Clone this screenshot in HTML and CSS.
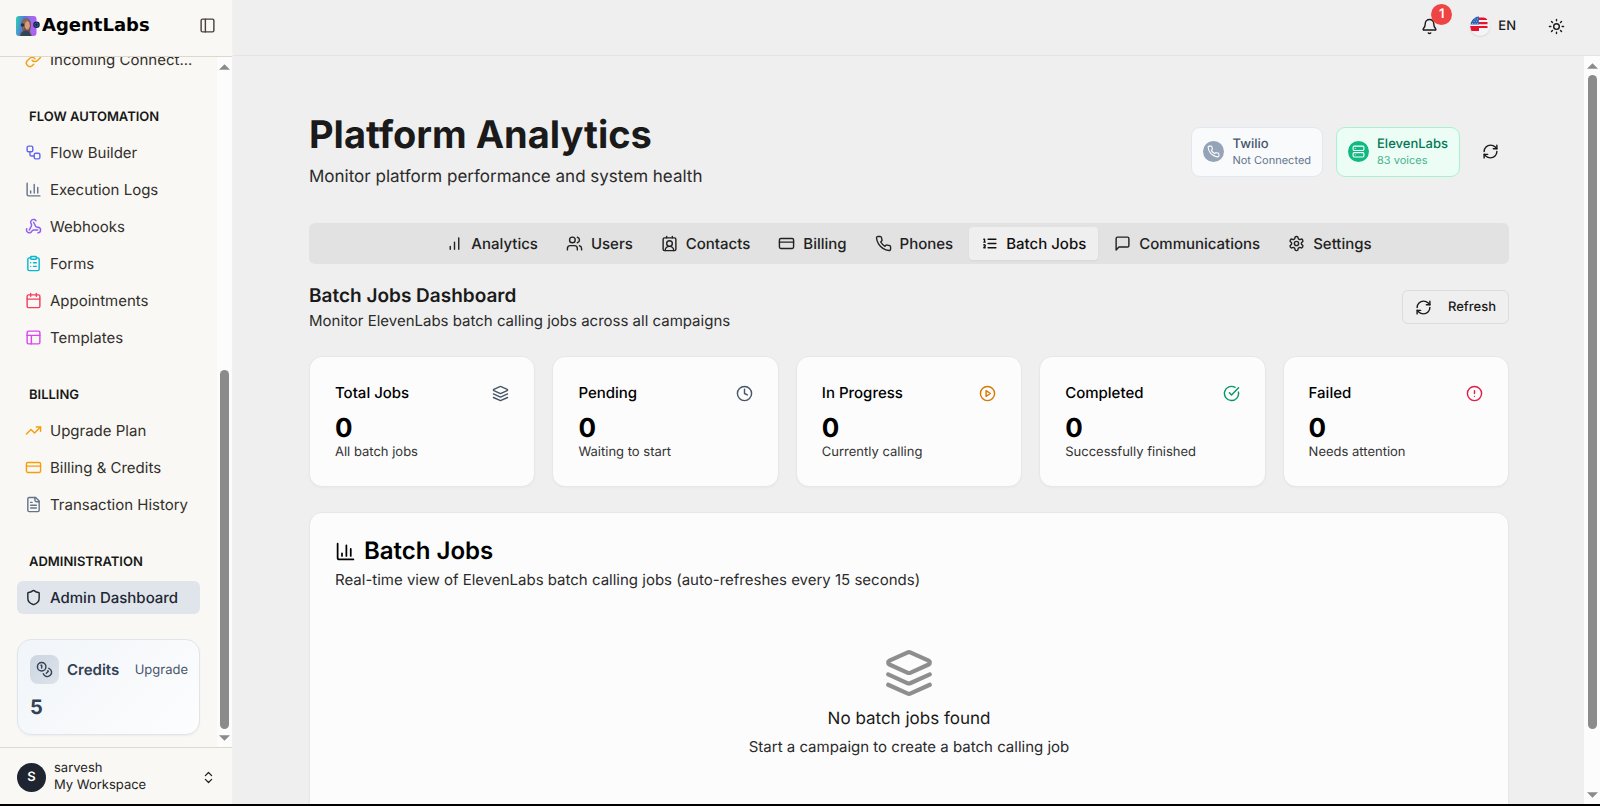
FILE: index.html
```html
<!DOCTYPE html>
<html lang="en">
<head>
<meta charset="utf-8">
<title>AgentLabs - Platform Analytics</title>
<link rel="stylesheet" href="styles.css">
</head>
<body>
<svg class="sprite" aria-hidden="true">
  <symbol id="i-panel" viewBox="0 0 24 24"><rect x="3" y="3" width="18" height="18" rx="2"/><path d="M9 3v18"/></symbol>
  <symbol id="i-link" viewBox="0 0 24 24"><path d="M10 13a5 5 0 0 0 7.54.54l3-3a5 5 0 0 0-7.07-7.07l-1.72 1.71"/><path d="M14 11a5 5 0 0 0-7.54-.54l-3 3a5 5 0 0 0 7.07 7.07l1.71-1.71"/></symbol>
  <symbol id="i-flow" viewBox="0 0 24 24"><rect x="3" y="3" width="8" height="8" rx="2"/><path d="M7 11v4a2 2 0 0 0 2 2h4"/><rect x="13" y="13" width="8" height="8" rx="2"/></symbol>
  <symbol id="i-chart" viewBox="0 0 24 24"><path d="M3 3v16a2 2 0 0 0 2 2h16M18 17V9M13 17V5M8 17v-3"/></symbol>
  <symbol id="i-bars" viewBox="0 0 24 24"><path d="M12 20V10M18 20V4M6 20v-4"/></symbol>
  <symbol id="i-webhook" viewBox="0 0 24 24"><path d="M18 16.98h-5.99c-1.1 0-1.95.94-2.48 1.9A4 4 0 0 1 2 17c.01-.7.2-1.4.57-2"/><path d="m6 17 3.13-5.78c.53-.97.1-2.18-.5-3.1a4 4 0 1 1 6.89-4.06"/><path d="m12 6 3.13 5.73C15.66 12.7 16.9 13 18 13a4 4 0 0 1 0 8"/></symbol>
  <symbol id="i-clipboard" viewBox="0 0 24 24"><rect x="8" y="2" width="8" height="4" rx="1"/><path d="M16 4h2a2 2 0 0 1 2 2v14a2 2 0 0 1-2 2H6a2 2 0 0 1-2-2V6a2 2 0 0 1 2-2h2M12 11h4M12 16h4M8 11h.01M8 16h.01"/></symbol>
  <symbol id="i-calendar" viewBox="0 0 24 24"><path d="M8 2v4M16 2v4M3 10h18"/><rect x="3" y="4" width="18" height="18" rx="2"/></symbol>
  <symbol id="i-template" viewBox="0 0 24 24"><rect x="3" y="3" width="18" height="18" rx="2"/><path d="M3 9h18M9 21V9"/></symbol>
  <symbol id="i-trend" viewBox="0 0 24 24"><path d="m22 7-8.500 8.500-5-5L2 17"/><path d="M16 7h6v6"/></symbol>
  <symbol id="i-card" viewBox="0 0 24 24"><rect x="2" y="5" width="20" height="14" rx="2"/><path d="M2 10h20"/></symbol>
  <symbol id="i-file" viewBox="0 0 24 24"><path d="M15 2H6a2 2 0 0 0-2 2v16a2 2 0 0 0 2 2h12a2 2 0 0 0 2-2V7Z"/><path d="M14 2v4a2 2 0 0 0 2 2h4M10 9H8M16 13H8M16 17H8"/></symbol>
  <symbol id="i-shield" viewBox="0 0 24 24"><path d="M20 13c0 5-3.500 7.500-7.660 8.950a1 1 0 0 1-.67-.01C7.500 20.500 4 18 4 13V6a1 1 0 0 1 1-1c2 0 4.500-1.200 6.240-2.720a1.170 1.170 0 0 1 1.520 0C14.510 3.810 17 5 19 5a1 1 0 0 1 1 1z"/></symbol>
  <symbol id="i-coins" viewBox="0 0 24 24"><circle cx="8" cy="8" r="6"/><path d="M18.090 10.370A6 6 0 1 1 10.340 18M7 6h1v4"/><path d="m16.710 13.880.7.710-2.820 2.820"/></symbol>
  <symbol id="i-updown" viewBox="0 0 24 24"><path d="m7 15 5 5 5-5M7 9l5-5 5 5"/></symbol>
  <symbol id="i-bell" viewBox="0 0 24 24"><path d="M10.268 21a2 2 0 0 0 3.464 0"/><path d="M3.262 15.326A1 1 0 0 0 4 17h16a1 1 0 0 0 .74-1.673C19.410 13.956 18 12.499 18 8A6 6 0 0 0 6 8c0 4.499-1.411 5.956-2.738 7.326"/></symbol>
  <symbol id="i-sun" viewBox="0 0 24 24"><circle cx="12" cy="12" r="4"/><path d="M12 2v2M12 20v2M4.930 4.930l1.410 1.410M17.660 17.660l1.410 1.410M2 12h2M20 12h2M6.340 17.660l-1.410 1.410M19.070 4.930l-1.410 1.410"/></symbol>
  <symbol id="i-phone" viewBox="0 0 24 24"><path d="M22 16.920v3a2 2 0 0 1-2.180 2 19.790 19.790 0 0 1-8.630-3.070 19.500 19.500 0 0 1-6-6 19.790 19.790 0 0 1-3.070-8.670A2 2 0 0 1 4.110 2h3a2 2 0 0 1 2 1.720 12.840 12.840 0 0 0 .7 2.810 2 2 0 0 1-.45 2.110L8.090 9.910a16 16 0 0 0 6 6l1.270-1.270a2 2 0 0 1 2.110-.45 12.840 12.840 0 0 0 2.810.7A2 2 0 0 1 22 16.920z"/></symbol>
  <symbol id="i-server" viewBox="0 0 24 24"><rect x="2" y="2" width="20" height="8" rx="2"/><rect x="2" y="14" width="20" height="8" rx="2"/><path d="M6 6h.01M6 18h.01"/></symbol>
  <symbol id="i-refresh" viewBox="0 0 24 24"><path d="M3 12a9 9 0 0 1 9-9 9.750 9.750 0 0 1 6.740 2.740L21 8"/><path d="M21 3v5h-5M21 12a9 9 0 0 1-9 9 9.750 9.750 0 0 1-6.740-2.740L3 16"/><path d="M8 16H3v5"/></symbol>
  <symbol id="i-users" viewBox="0 0 24 24"><path d="M16 21v-2a4 4 0 0 0-4-4H6a4 4 0 0 0-4 4v2"/><circle cx="9" cy="7" r="4"/><path d="M22 21v-2a4 4 0 0 0-3-3.870M16 3.130a4 4 0 0 1 0 7.750"/></symbol>
  <symbol id="i-contact" viewBox="0 0 24 24"><path d="M16 2v2M17.915 22a6 6 0 0 0-12 0M8 2v2"/><circle cx="12" cy="12" r="4"/><rect x="3" y="4" width="18" height="18" rx="2"/></symbol>
  <symbol id="i-list" viewBox="0 0 24 24"><path d="M10 12h11M10 18h11M10 6h11M4 10h2M4 6h1v4M6 18H4c0-1 2-2 2-3s-1-1.500-2-1"/></symbol>
  <symbol id="i-message" viewBox="0 0 24 24"><path d="M21 15a2 2 0 0 1-2 2H7l-4 4V5a2 2 0 0 1 2-2h14a2 2 0 0 1 2 2z"/></symbol>
  <symbol id="i-gear" viewBox="0 0 24 24"><path d="M12.220 2h-.44a2 2 0 0 0-2 2v.18a2 2 0 0 1-1 1.730l-.43.25a2 2 0 0 1-2 0l-.15-.08a2 2 0 0 0-2.730.73l-.22.38a2 2 0 0 0 .73 2.730l.15.1a2 2 0 0 1 1 1.720v.51a2 2 0 0 1-1 1.740l-.15.09a2 2 0 0 0-.73 2.730l.22.38a2 2 0 0 0 2.730.73l.15-.08a2 2 0 0 1 2 0l.43.25a2 2 0 0 1 1 1.730V20a2 2 0 0 0 2 2h.44a2 2 0 0 0 2-2v-.18a2 2 0 0 1 1-1.730l.43-.25a2 2 0 0 1 2 0l.15.08a2 2 0 0 0 2.730-.73l.22-.39a2 2 0 0 0-.73-2.730l-.15-.08a2 2 0 0 1-1-1.740v-.5a2 2 0 0 1 1-1.740l.15-.09a2 2 0 0 0 .73-2.730l-.22-.38a2 2 0 0 0-2.730-.73l-.15.08a2 2 0 0 1-2 0l-.43-.25a2 2 0 0 1-1-1.730V4a2 2 0 0 0-2-2z"/><circle cx="12" cy="12" r="3"/></symbol>
  <symbol id="i-layers" viewBox="0 0 24 24"><path d="m12.830 2.180a2 2 0 0 0-1.660 0L2.600 6.080a1 1 0 0 0 0 1.830l8.580 3.910a2 2 0 0 0 1.660 0l8.580-3.900a1 1 0 0 0 0-1.830Z"/><path d="m22 17.650-9.170 4.160a2 2 0 0 1-1.660 0L2 17.650"/><path d="m22 12.650-9.170 4.160a2 2 0 0 1-1.660 0L2 12.650"/></symbol>
  <symbol id="i-clock" viewBox="0 0 24 24"><circle cx="12" cy="12" r="10"/><path d="M12 6v6l4 2"/></symbol>
  <symbol id="i-play" viewBox="0 0 24 24"><circle cx="12" cy="12" r="10"/><path d="m10 8 6 4-6 4z"/></symbol>
  <symbol id="i-check" viewBox="0 0 24 24"><path d="M21.801 10A10 10 0 1 1 17 3.335"/><path d="m9 11 3 3L22 4"/></symbol>
  <symbol id="i-alert" viewBox="0 0 24 24"><circle cx="12" cy="12" r="10"/><path d="M12 8v4M12 16h.01"/></symbol>
  <symbol id="i-up" viewBox="0 0 12 6"><path class="arrow" d="M6 0 12 6H0z"/></symbol>
  <symbol id="i-down" viewBox="0 0 12 6"><path class="arrow" d="M0 0h12L6 6z"/></symbol>
</svg>

<div class="app">
  <aside class="sidebar">
    <div class="brand">
      <a class="logo" href="#">
        <svg class="logo-mark" viewBox="0 0 24 20" aria-hidden="true">
          <defs><linearGradient id="lg" x1="0" y1="0.300" x2="1" y2="0.500"><stop offset="0" stop-color="#2fc9b4"/><stop offset="0.350" stop-color="#5a78dc"/><stop offset="0.700" stop-color="#a06af2"/><stop offset="1" stop-color="#b060ef"/></linearGradient></defs>
          <rect width="20.500" height="20" rx="3" fill="url(#lg)"/>
          <path d="M4 20c0-3 1-4 3-5L5.500 9C5 5 7.500 2.500 10.500 2.500S15 5 15 9l-1 7 2 4z" fill="#6a5148"/>
          <path d="M5 20c0-3 2-5 5-5s4 2 5 5z" fill="#2d4554"/>
          <path d="M9 6c2-2 4-1 4.500 1l.5 3-1.500 3.500H10L8.500 10z" fill="#d99b7c"/>
          <path d="M6 7c0-5 8-5 8-2-3-1-5 1-5 4l-1 5c-2-1-2-5-2-7z" fill="#8c6a4e"/>
          <circle cx="6.500" cy="9" r="1.800" fill="#203048"/>
          <circle cx="20.500" cy="8.800" r="3.300" fill="#10234c"/>
          <circle cx="20.500" cy="8.800" r="1.700" fill="none" stroke="#5275b4" stroke-width=".7"/>
        </svg>
        <span>AgentLabs</span>
      </a>
      <button class="icon-button panel-toggle" aria-label="Toggle sidebar"><svg class="icon"><use href="#i-panel"/></svg></button>
    </div>

    <div class="side-scroll">
      <nav class="side-content" aria-label="Main">
        <ul class="nav-list">
          <li><a class="nav-item" href="#"><svg class="icon amber"><use href="#i-link"/></svg>Incoming Connect...</a></li>
        </ul>
        <section class="nav-group">
          <h2>FLOW AUTOMATION</h2>
          <ul class="nav-list">
            <li><a class="nav-item" href="#"><svg class="icon indigo"><use href="#i-flow"/></svg>Flow Builder</a></li>
            <li><a class="nav-item" href="#"><svg class="icon slate"><use href="#i-chart"/></svg>Execution Logs</a></li>
            <li><a class="nav-item" href="#"><svg class="icon violet"><use href="#i-webhook"/></svg>Webhooks</a></li>
            <li><a class="nav-item" href="#"><svg class="icon cyan"><use href="#i-clipboard"/></svg>Forms</a></li>
            <li><a class="nav-item" href="#"><svg class="icon rose"><use href="#i-calendar"/></svg>Appointments</a></li>
            <li><a class="nav-item" href="#"><svg class="icon fuchsia"><use href="#i-template"/></svg>Templates</a></li>
          </ul>
        </section>
        <section class="nav-group">
          <h2>BILLING</h2>
          <ul class="nav-list">
            <li><a class="nav-item" href="#"><svg class="icon amber"><use href="#i-trend"/></svg>Upgrade Plan</a></li>
            <li><a class="nav-item" href="#"><svg class="icon amber"><use href="#i-card"/></svg>Billing &amp; Credits</a></li>
            <li><a class="nav-item" href="#"><svg class="icon slate"><use href="#i-file"/></svg>Transaction History</a></li>
          </ul>
        </section>
        <section class="nav-group">
          <h2>ADMINISTRATION</h2>
          <ul class="nav-list">
            <li><a class="nav-item active" href="#" aria-current="page"><svg class="icon"><use href="#i-shield"/></svg>Admin Dashboard</a></li>
          </ul>
        </section>
        <section class="credits">
          <div class="credits-row">
            <span class="coin-tile"><svg class="icon"><use href="#i-coins"/></svg></span>
            <h3>Credits</h3>
            <a href="#">Upgrade</a>
          </div>
          <p>5</p>
        </section>
      </nav>
      <div class="scrollbar side-bar" aria-hidden="true"><svg><use href="#i-up"/></svg><span class="track"><span class="thumb"></span></span><svg><use href="#i-down"/></svg></div>
    </div>

    <button class="account">
      <span class="avatar">S</span>
      <span class="account-text"><span>sarvesh</span><span>My Workspace</span></span>
      <svg class="icon"><use href="#i-updown"/></svg>
    </button>
  </aside>

  <div class="main">
    <header class="topbar">
      <button class="icon-button bell" aria-label="Notifications"><svg class="icon"><use href="#i-bell"/></svg><span class="badge">1</span></button>
      <button class="language">
        <svg class="flag" viewBox="0 0 20 20" aria-hidden="true">
          <clipPath id="fc"><circle cx="10" cy="10" r="10"/></clipPath>
          <g clip-path="url(#fc)">
            <rect width="20" height="20" fill="#f4f4f4"/>
            <path fill="#e8112d" d="M9 1.500h8.500v2.500H9zM9 6h8.500v2.300H9zM0 10h17.500v2H0zM0 12h9v3H0z"/>
            <path fill="#2b62b5" d="M0 0h9v8.500H0z"/>
            <path stroke="#b9cdea" stroke-width=".8" stroke-dasharray="1 1.500" d="M2 3h7M1 5.300h8M2 7.600h7"/>
          </g>
        </svg>
        <span>EN</span>
      </button>
      <button class="icon-button" aria-label="Toggle theme"><svg class="icon"><use href="#i-sun"/></svg></button>
    </header>

    <div class="main-scroll">
      <main class="viewport">
        <div class="page">
          <div class="page-head">
            <div>
              <h1>Platform Analytics</h1>
              <p>Monitor platform performance and system health</p>
            </div>
            <div class="status">
              <div class="chip">
                <span class="chip-icon"><svg class="icon"><use href="#i-phone"/></svg></span>
                <span class="chip-text"><span>Twilio</span><small>Not Connected</small></span>
              </div>
              <div class="chip connected">
                <span class="chip-icon"><svg class="icon"><use href="#i-server"/></svg></span>
                <span class="chip-text"><span>ElevenLabs</span><small>83 voices</small></span>
              </div>
              <button class="icon-button reload" aria-label="Reload status"><svg class="icon"><use href="#i-refresh"/></svg></button>
            </div>
          </div>

          <div class="tabs" role="tablist">
            <button role="tab"><svg class="icon"><use href="#i-bars"/></svg>Analytics</button>
            <button role="tab"><svg class="icon"><use href="#i-users"/></svg>Users</button>
            <button role="tab"><svg class="icon"><use href="#i-contact"/></svg>Contacts</button>
            <button role="tab"><svg class="icon"><use href="#i-card"/></svg>Billing</button>
            <button role="tab"><svg class="icon"><use href="#i-phone"/></svg>Phones</button>
            <button role="tab" aria-selected="true" class="selected"><svg class="icon"><use href="#i-list"/></svg>Batch Jobs</button>
            <button role="tab"><svg class="icon"><use href="#i-message"/></svg>Communications</button>
            <button role="tab"><svg class="icon"><use href="#i-gear"/></svg>Settings</button>
          </div>

          <div class="section-head">
            <div>
              <h2>Batch Jobs Dashboard</h2>
              <p>Monitor ElevenLabs batch calling jobs across all campaigns</p>
            </div>
            <button class="refresh"><svg class="icon"><use href="#i-refresh"/></svg>Refresh</button>
          </div>

          <div class="stats">
            <article class="card stat"><div class="stat-head"><h3>Total Jobs</h3><svg class="icon steel"><use href="#i-layers"/></svg></div><strong>0</strong><p>All batch jobs</p></article>
            <article class="card stat"><div class="stat-head"><h3>Pending</h3><svg class="icon steel"><use href="#i-clock"/></svg></div><strong>0</strong><p>Waiting to start</p></article>
            <article class="card stat"><div class="stat-head"><h3>In Progress</h3><svg class="icon orange"><use href="#i-play"/></svg></div><strong>0</strong><p>Currently calling</p></article>
            <article class="card stat"><div class="stat-head"><h3>Completed</h3><svg class="icon green"><use href="#i-check"/></svg></div><strong>0</strong><p>Successfully finished</p></article>
            <article class="card stat"><div class="stat-head"><h3>Failed</h3><svg class="icon red"><use href="#i-alert"/></svg></div><strong>0</strong><p>Needs attention</p></article>
          </div>

          <section class="card jobs">
            <h2><svg class="icon"><use href="#i-chart"/></svg>Batch Jobs</h2>
            <p>Real-time view of ElevenLabs batch calling jobs (auto-refreshes every 15 seconds)</p>
            <div class="empty">
              <svg class="icon"><use href="#i-layers"/></svg>
              <h3>No batch jobs found</h3>
              <p>Start a campaign to create a batch calling job</p>
            </div>
          </section>
        </div>
      </main>
      <div class="scrollbar main-bar" aria-hidden="true"><svg><use href="#i-up"/></svg><span class="track"><span class="thumb"></span></span><svg><use href="#i-down"/></svg></div>
    </div>
  </div>
</div>
</body>
</html>
```
FILE: styles.css
```css
* { box-sizing: border-box; }
body { margin: 0; font-family: Inter, "Liberation Sans", sans-serif; font-size: 15px; line-height: 22px; color: #1a1a1a; background: #efefef; text-rendering: geometricPrecision; }
h1, h2, h3, p, ul { margin: 0; padding: 0; }
ul { list-style: none; }
a { color: inherit; text-decoration: none; }
button { font: inherit; color: inherit; background: none; border: 0; padding: 0; display: flex; align-items: center; cursor: pointer; text-rendering: inherit; }
.sprite { position: absolute; width: 0; height: 0; }
.icon { width: 17px; height: 17px; flex: none; fill: none; stroke: currentColor; stroke-width: 2; stroke-linecap: round; stroke-linejoin: round; }
.icon-button { width: 34px; height: 34px; justify-content: center; }

.amber { color: #f59e0b; }
.indigo { color: #6366f1; }
.slate { color: #64748b; }
.violet { color: #8b5cf6; }
.cyan { color: #06b6d4; }
.rose { color: #f43f5e; }
.fuchsia { color: #d946ef; }
.steel { color: #475569; }
.orange { color: #d97706; }
.green { color: #059669; }
.red { color: #e11d48; }

.app { display: grid; grid-template-columns: 233px minmax(0, 1fr); grid-template-rows: minmax(0, 1fr); height: 100vh; border-bottom: 2px solid #000; }

/* Sidebar */
.sidebar { display: flex; flex-direction: column; min-height: 0; background: #f9f8f4; border-right: 1px solid #f1f1ef; }
.brand { display: flex; align-items: center; justify-content: space-between; height: 57px; padding: 0 8px 5px 16px; border-bottom: 1px solid #dcd8cc; flex: none; }
.logo { display: flex; align-items: center; gap: 2px; font: bold 18px/20px "DejaVu Sans", sans-serif; color: #000; }
.logo-mark { width: 24px; height: 20px; }
.panel-toggle { color: #4a4040; }
.side-scroll { display: flex; flex: 1; min-height: 0; }
.side-content { flex: 1; display: flex; flex-direction: column; justify-content: flex-end; gap: 25px; overflow: hidden; padding: 0 17px 12px; color: #33302c; }
.side-content > * { flex: none; }
.nav-list { display: flex; flex-direction: column; gap: 4px; }
.nav-item { display: flex; align-items: center; gap: 8px; height: 33px; padding: 0 8px; border-radius: 6px; white-space: nowrap; }
.nav-item.active { background: #e0e5ec; color: #1f2733; font-weight: 500; }
.nav-group { display: flex; flex-direction: column; gap: 3px; }
.nav-group h2 { padding-left: 12px; font-size: 13px; line-height: 32px; font-weight: 600; color: #171717; }
.credits { border: 1px solid #dfe5ed; border-radius: 14px; padding: 15px 11px 13px 12px; background: linear-gradient(135deg, #f1f5f9, #fdfdfe); color: #334155; box-shadow: 0 1px 2px rgba(0, 0, 0, .05); }
.credits-row { display: flex; align-items: center; gap: 8px; }
.coin-tile { display: grid; place-items: center; width: 29px; height: 29px; border-radius: 8px; background: linear-gradient(135deg, #cbd5e1, #dde3ea); }
.credits h3 { flex: 1; font-size: 15px; font-weight: 600; }
.credits a { font-size: 13px; color: #475569; }
.credits p { margin-top: 9px; font-size: 20px; line-height: 28px; font-weight: 700; }
.account { height: 57px; flex: none; border-top: 1px solid #dcd8cc; padding: 2px 16px 0 17px; gap: 8px; text-align: left; font-size: 13px; line-height: 17px; color: #1f1f1f; }
.avatar { display: grid; place-items: center; width: 29px; height: 29px; border-radius: 50%; background: #1e2530; color: #fff; font-weight: 600; }
.account-text { flex: 1; display: flex; flex-direction: column; }
.account .icon { width: 15px; height: 15px; }

/* Scrollbars */
.scrollbar { width: 16px; flex: none; display: flex; flex-direction: column; align-items: center; gap: 6px; padding: 7px 0 6px; background: #fcfcfc; }
.scrollbar svg { width: 11px; height: 6px; flex: none; }
.arrow { fill: #8b8b8b; }
.track { flex: 1; display: flex; flex-direction: column; width: 9px; }
.thumb { border-radius: 5px; background: #8b8b8b; }
.side-bar { width: 15px; }
.side-bar .track { justify-content: flex-end; }
.side-bar .thumb { height: 55%; }
.main-bar .thumb { height: 92%; }

/* Main column */
.main { display: flex; flex-direction: column; min-width: 0; min-height: 0; }
.topbar { display: flex; align-items: center; justify-content: flex-end; height: 56px; flex: none; padding: 0 27px 3px 0; border-bottom: 1px solid #e4e4e4; }
.bell { position: relative; margin-right: 24px; }
.badge { position: absolute; top: -5px; right: -6px; width: 21px; height: 21px; border-radius: 50%; background: #ef4444; color: #fff; font-size: 13px; line-height: 21px; font-weight: 600; text-align: center; }
.language { gap: 8px; margin-right: 23px; font-size: 13px; font-weight: 500; }
.flag { width: 20px; height: 20px; border-radius: 50%; box-shadow: 0 1px 2px rgba(0, 0, 0, .1); }
.main-scroll { display: flex; flex: 1; min-height: 0; }
.viewport { flex: 1; min-width: 0; overflow: hidden; padding: 56px 24px 0 25px; }
.page { max-width: 1200px; margin: 0 auto; }

.page-head { display: flex; align-items: center; justify-content: space-between; margin-bottom: 32px; }
h1 { font-size: 38px; line-height: 46px; font-weight: 700; }
.page-head p { margin-top: 5px; font-size: 17px; line-height: 28px; color: #2b2b2b; }
.status { display: flex; align-items: center; gap: 13px; }
.chip { display: flex; align-items: center; gap: 8px; height: 50px; padding: 0 11px; border: 1px solid #e2e8f0; border-radius: 9px; background: #f8fafc; color: #475569; font-size: 13px; line-height: 17px; font-weight: 500; }
.chip-text { display: flex; flex-direction: column; }
.chip small { font-size: 11px; line-height: 15px; font-weight: 400; color: #64748b; }
.chip-icon { display: grid; place-items: center; width: 21px; height: 21px; border-radius: 50%; background: #94a3b8; color: #fff; }
.chip-icon .icon { width: 13px; height: 13px; }
.connected { background: #ecfdf5; border-color: #a7f3d0; color: #047857; }
.connected small { color: #46b38c; }
.connected .chip-icon { background: #10b981; }
.reload { margin-right: 2px; }

.tabs { display: flex; justify-content: center; gap: 4px; padding: 4px; border-radius: 6px; background: #e2e2e2; color: #222; }
.tabs button { gap: 8px; height: 33px; padding: 0 12px; border-radius: 4px; font-weight: 500; }
.tabs .selected { background: #efefef; color: #111; box-shadow: 0 1px 2px rgba(0, 0, 0, .05); }

.section-head { display: flex; align-items: center; justify-content: space-between; margin: 18px 0 24px; }
.section-head h2 { font-size: 19px; line-height: 28px; font-weight: 600; }
.section-head p { color: #2b2b2b; }
.refresh { gap: 16px; height: 34px; padding: 0 12px; border: 1px solid #dcdcdc; border-radius: 6px; font-size: 13px; font-weight: 500; }

.card { border: 1px solid #e7e7e7; border-radius: 13px; background: #fcfcfc; padding: 25px; color: #000; box-shadow: 0 1px 2px rgba(0, 0, 0, .03); }
.stats { display: grid; grid-template-columns: repeat(5, minmax(0, 1fr)); gap: 17px; margin-bottom: 25px; }
.stat-head { display: flex; align-items: center; justify-content: space-between; margin-bottom: 10px; }
.stat h3 { font-size: 15px; font-weight: 500; }
.stat strong { display: block; font-size: 26px; line-height: 30px; font-weight: 700; }
.stat p { font-size: 13px; line-height: 17px; color: #333; }

.jobs h2 { display: flex; align-items: center; gap: 8px; font-size: 24px; line-height: 26px; font-weight: 600; }
.jobs h2 .icon { width: 21px; height: 21px; }
.jobs p { margin-top: 5px; color: #2b2b2b; }
.empty { display: flex; flex-direction: column; align-items: center; padding: 57px 0; text-align: center; }
.empty .icon { width: 50px; height: 50px; color: #8e8e8e; }
.empty h3 { margin-top: 8px; font-size: 17px; line-height: 26px; font-weight: 400; color: #1a1a1a; }
.empty p { margin-top: 4px; }
```
